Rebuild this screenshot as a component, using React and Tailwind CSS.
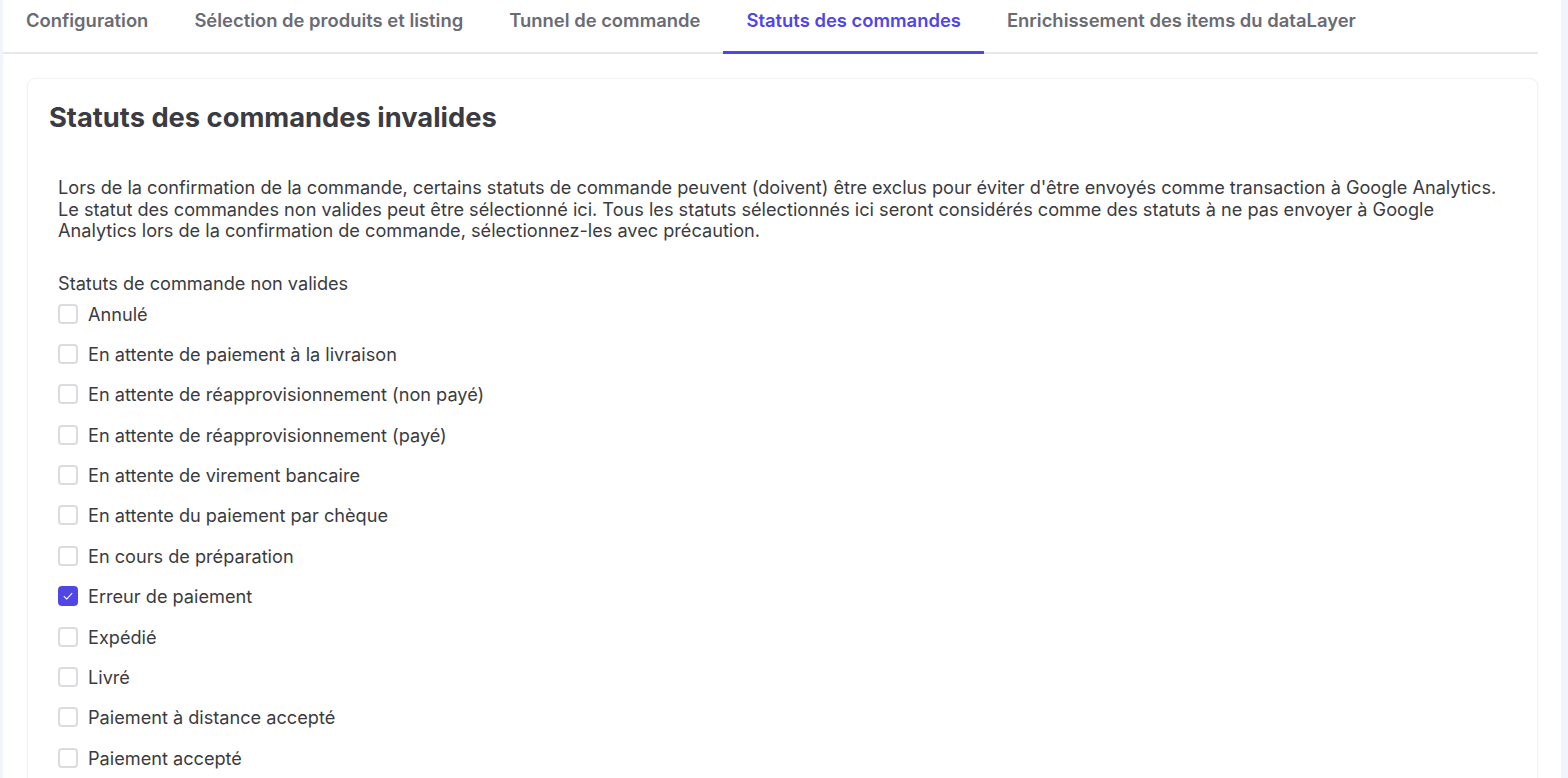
const tabs = [
  'Configuration',
  'Sélection de produits et listing',
  'Tunnel de commande',
  'Statuts des commandes',
  'Enrichissement des items du dataLayer',
]

const statuses = [
  { label: 'Annulé', checked: false },
  { label: 'En attente de paiement à la livraison', checked: false },
  { label: 'En attente de réapprovisionnement (non payé)', checked: false },
  { label: 'En attente de réapprovisionnement (payé)', checked: false },
  { label: 'En attente de virement bancaire', checked: false },
  { label: 'En attente du paiement par chèque', checked: false },
  { label: 'En cours de préparation', checked: false },
  { label: 'Erreur de paiement', checked: true },
  { label: 'Expédié', checked: false },
  { label: 'Livré', checked: false },
  { label: 'Paiement à distance accepté', checked: false },
  { label: 'Paiement accepté', checked: false },
]

function Checkbox({ checked }) {
  if (checked) {
    return (
      <span className="flex h-5 w-5 shrink-0 items-center justify-center rounded-[4px] bg-[#4f46e5]">
        <svg viewBox="0 0 16 16" className="h-[14px] w-[14px]" fill="none" stroke="white" strokeWidth="1.2" strokeLinecap="round" strokeLinejoin="round">
          <path d="M3.5 8.5l3 3 6-6.5" />
        </svg>
      </span>
    )
  }
  return <span className="h-5 w-5 shrink-0 rounded-[4px] border-2 border-[#dcdce0] bg-white" />
}

export default function App() {
  return (
    <div className="min-h-screen bg-[#f1f4f9] pl-[3px] pr-[7px] font-['Inter',sans-serif] text-[#3b3b41]">
      <div className="min-h-[778px] bg-white pr-[23px]">
        <nav className="flex border-b-2 border-[#e7e7eb]">
          {tabs.map((tab) => {
            const active = tab === 'Statuts des commandes'
            return (
              <div
                key={tab}
                className={
                  active
                    ? '-mb-[2px] border-b-[3px] border-[#4f46e5] px-[23px] pt-[8px] pb-[19px] text-[18.42px] font-semibold leading-[24px] text-[#4f46e5]'
                    : 'px-[23px] pt-[8px] pb-[20px] text-[18.42px] font-semibold leading-[24px] text-[#6b6b74]'
                }
              >
                {tab}
              </div>
            )
          })}
        </nav>

        <div className="pl-[24px] pt-[24px]">
          <section className="rounded-lg border border-[#f2f2f4] bg-white px-[21px] pt-[21px] pb-6 shadow-sm shadow-black/5">
            <h1 className="text-[27.3px] font-bold leading-[36px] text-[#3b3b41]">
              Statuts des commandes invalides
            </h1>

            <div className="px-[9px] pt-[41px]">
              <p className="text-[18.15px] leading-[21.5px]">
                Lors de la confirmation de la commande, certains statuts de commande peuvent (doivent) être exclus pour éviter d&apos;être envoyés comme transaction à Google Analytics.
                <br />
                Le statut des commandes non valides peut être sélectionné ici. Tous les statuts sélectionnés ici seront considérés comme des statuts à ne pas envoyer à Google Analytics lors de la confirmation de commande, sélectionnez-les avec précaution.
              </p>

              <p className="mt-[30px] text-[18.15px] leading-[22px]">Statuts de commande non valides</p>

              <div className="mt-[10px] flex flex-col gap-[20.4px]">
                {statuses.map((s) => (
                  <label key={s.label} className="flex items-center gap-[10px] text-[18.15px] leading-[20px]">
                    <Checkbox checked={s.checked} />
                    <span>{s.label}</span>
                  </label>
                ))}
              </div>
            </div>
          </section>
        </div>
      </div>
    </div>
  )
}
